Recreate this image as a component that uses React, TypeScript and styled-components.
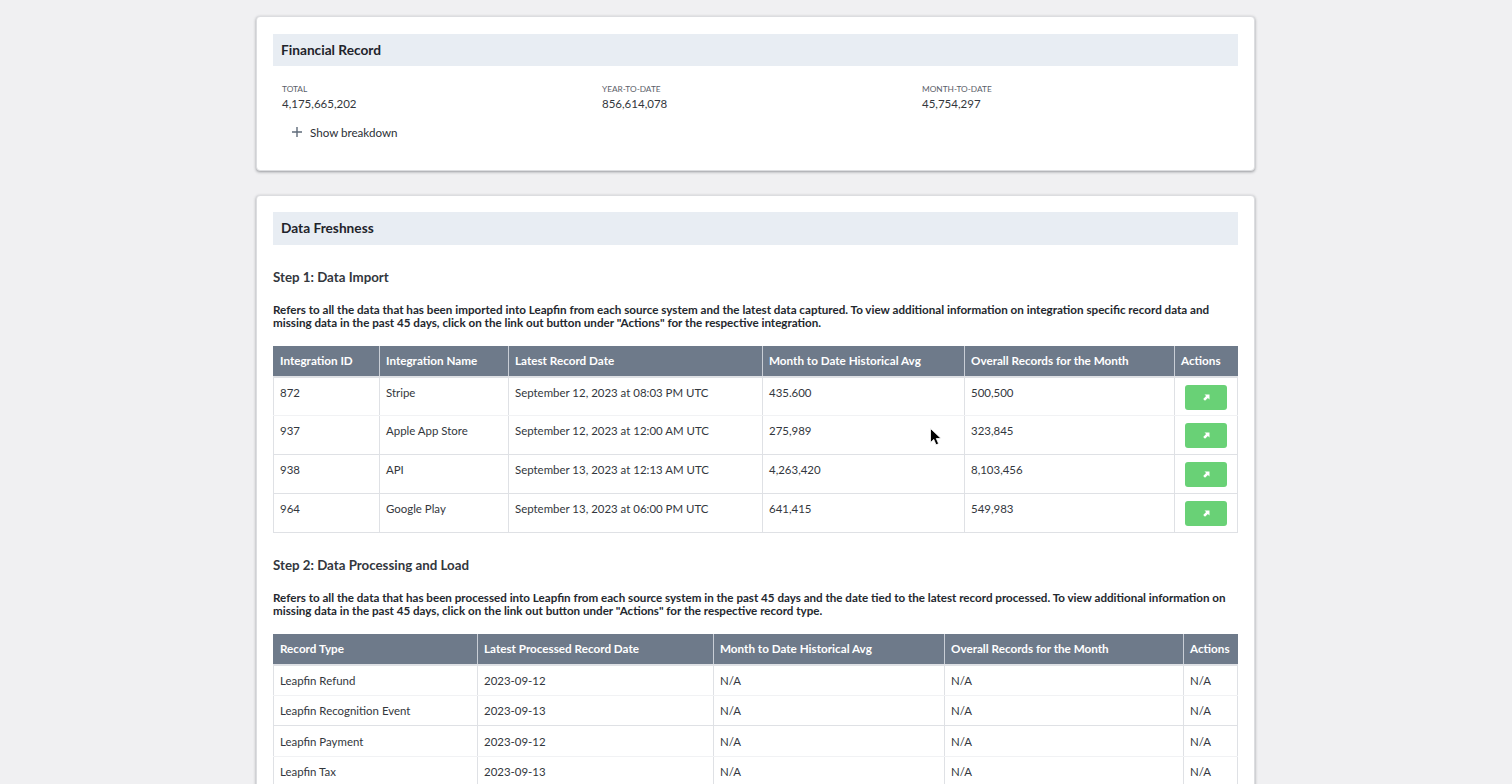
import React from 'react'
import styled, { createGlobalStyle } from 'styled-components'

const GlobalStyle = createGlobalStyle`
    html, body {
        margin: 0;
        padding: 0;
        height: 784px;
        overflow: hidden;
        background: #f0f0f2;
        font-family: Lato, 'Open Sans', sans-serif;
        color: #2c3036;
    }
`

const Page = styled.div`
    position: relative;
    width: 999px;
    margin: 0 0 0 256px;
    padding-top: 16px;
    display: flex;
    flex-direction: column;
    gap: 24px;
`

const Card = styled.section<{ $top: number }>`
    background: #fff;
    border: 1px solid #dcdde0;
    border-radius: 4px;
    box-shadow: 0 1px 3px rgba(40, 44, 52, 0.45);
    padding: ${p => p.$top}px 16px 16px;
`

const CardTitle = styled.h2<{ $tall?: boolean }>`
    margin: 0;
    height: ${p => (p.$tall ? 33 : 32)}px;
    line-height: 32px;
    padding-left: 8px;
    background: #e8edf3;
    font-size: 13.7px;
    font-weight: 700;
    color: #1f242b;
`

const Stats = styled.div`
    display: grid;
    grid-template-columns: repeat(3, 320px);
    padding: 18px 0 0 9px;
`

const StatLabel = styled.div`
    font-size: 8.3px;
    line-height: 11px;
    color: #5b616a;
    text-transform: uppercase;
`

const StatValue = styled.div`
    font-size: 11.5px;
    line-height: 17px;
    color: #33373d;
`

const Breakdown = styled.button`
    display: flex;
    align-items: center;
    gap: 8px;
    margin: 13px 0 15px 19px;
    padding: 0;
    height: 14px;
    border: 0;
    background: none;
    font: inherit;
    font-size: 11.6px;
    color: #2c3036;
`

const StepTitle = styled.h3`
    margin: 24px 0 0;
    font-size: 13.3px;
    line-height: 17px;
    font-weight: 700;
    color: #33373d;
`

const StepText = styled.p<{ $size: number }>`
    margin: 17px 0 17px;
    font-size: ${p => p.$size}px;
    line-height: 13px;
    font-weight: 700;
    color: #24282e;
`

const Table = styled.table`
    width: 964px;
    table-layout: fixed;
    border-collapse: collapse;
    font-size: 11.45px;
`

const HeadCell = styled.th`
    height: 31px;
    padding: 0 6px 2px;
    background: #6e7a8a;
    border-left: 1px solid #c9ced6;
    border-bottom: 2px solid #dfe1e5;
    color: #fff;
    font-weight: 700;
    font-size: 11.7px;
    text-align: left;
    white-space: nowrap;
    box-sizing: border-box;
    &:first-child {
        border-left-color: #6e7a8a;
    }
    &:last-child {
        border-right: 1px solid #6e7a8a;
    }
`

const Cell = styled.td<{ $compact?: boolean }>`
    height: ${p => (p.$compact ? 30.5 : 38.75)}px;
    padding: ${p => (p.$compact ? '2px 6px 0' : '8px 6px 0')};
    vertical-align: ${p => (p.$compact ? 'middle' : 'top')};
    border: 1px solid #dfe1e5;
    line-height: 14px;
    color: #33373d;
    white-space: nowrap;
    box-sizing: border-box;
`

const Row = styled.tr<{ $faint?: boolean }>`
    ${p => (p.$faint ? 'td { border-bottom-color: #f1f2f4; }' : '')}
`

const ActionCell = styled(Cell)`
    padding: 7px 0 0;
    text-align: center;
`

const LinkButton = styled.button`
    display: inline-flex;
    align-items: center;
    justify-content: center;
    vertical-align: top;
    width: 42px;
    height: 25px;
    padding: 0;
    border: 0;
    border-radius: 3px;
    background: #69d176;
`

const Cursor = styled.svg`
    position: absolute;
    left: 674px;
    top: 428px;
`

const PlusIcon = () => (
    <svg width='10' height='10' viewBox='0 0 10 10'>
        <path d='M5 0v10M0 5h10' stroke='#5f6b7a' strokeWidth='1.4' fill='none' />
    </svg>
)

const ArrowIcon = () => (
    <svg width='7' height='7' viewBox='0 0 7 7'>
        <path d='M1.5 0.5H6.5V5.5L4.9 3.9 2 6.8 0.2 5 3.1 2.1Z' fill='#fff' />
    </svg>
)

const stats = [
    { label: 'Total', value: '4,175,665,202' },
    { label: 'Year-to-date', value: '856,614,078' },
    { label: 'Month-to-date', value: '45,754,297' },
]

const importColumns = [
    { title: 'Integration ID', width: 106 },
    { title: 'Integration Name', width: 129 },
    { title: 'Latest Record Date', width: 254 },
    { title: 'Month to Date Historical Avg', width: 202 },
    { title: 'Overall Records for the Month', width: 210 },
    { title: 'Actions', width: 63 },
]

const importRows = [
    ['872', 'Stripe', 'September 12, 2023 at 08:03 PM UTC', '435.600', '500,500'],
    ['937', 'Apple App Store', 'September 12, 2023 at 12:00 AM UTC', '275,989', '323,845'],
    ['938', 'API', 'September 13, 2023 at 12:13 AM UTC', '4,263,420', '8,103,456'],
    ['964', 'Google Play', 'September 13, 2023 at 06:00 PM UTC', '641,415', '549,983'],
]

const loadColumns = [
    { title: 'Record Type', width: 204 },
    { title: 'Latest Processed Record Date', width: 236 },
    { title: 'Month to Date Historical Avg', width: 231 },
    { title: 'Overall Records for the Month', width: 239 },
    { title: 'Actions', width: 54 },
]

const loadRows = [
    ['Leapfin Refund', '2023-09-12'],
    ['Leapfin Recognition Event', '2023-09-13'],
    ['Leapfin Payment', '2023-09-12'],
    ['Leapfin Tax', '2023-09-13'],
]

const ColGroup = ({ columns }: { columns: { title: string; width: number }[] }) => (
    <colgroup>
        {columns.map(c => (
            <col key={c.title} width={c.width} />
        ))}
    </colgroup>
)

const HeadRow = ({ columns }: { columns: { title: string; width: number }[] }) => (
    <thead>
        <tr>
            {columns.map(c => (
                <HeadCell key={c.title}>{c.title}</HeadCell>
            ))}
        </tr>
    </thead>
)

const App = () => (
    <Page>
        <GlobalStyle />
        <Card $top={17}>
            <CardTitle>Financial Record</CardTitle>
            <Stats>
                {stats.map(s => (
                    <div key={s.label}>
                        <StatLabel>{s.label}</StatLabel>
                        <StatValue>{s.value}</StatValue>
                    </div>
                ))}
            </Stats>
            <Breakdown>
                <PlusIcon />
                Show breakdown
            </Breakdown>
        </Card>
        <Card $top={16}>
            <CardTitle $tall>Data Freshness</CardTitle>
            <StepTitle>Step 1: Data Import</StepTitle>
            <StepText $size={11.65}>
                Refers to all the data that has been imported into Leapfin from each source system and the latest data
                captured. To view additional information on integration specific record data and missing data in the past
                45 days, click on the link out button under "Actions" for the respective integration.
            </StepText>
            <Table>
                <ColGroup columns={importColumns} />
                <HeadRow columns={importColumns} />
                <tbody>
                    {importRows.map((row, i) => (
                        <Row key={row[0]} $faint={i === 0}>
                            {row.map(value => (
                                <Cell key={value}>{value}</Cell>
                            ))}
                            <ActionCell>
                                <LinkButton>
                                    <ArrowIcon />
                                </LinkButton>
                            </ActionCell>
                        </Row>
                    ))}
                </tbody>
            </Table>
            <StepTitle>Step 2: Data Processing and Load</StepTitle>
            <StepText $size={11.61}>
                Refers to all the data that has been processed into Leapfin from each source system in the past 45 days and
                the date tied to the latest record processed. To view additional information on missing data in the past 45
                days, click on the link out button under "Actions" for the respective record type.
            </StepText>
            <Table>
                <ColGroup columns={loadColumns} />
                <HeadRow columns={loadColumns} />
                <tbody>
                    {loadRows.map((row, i) => (
                        <Row key={row[0]} $faint={i % 2 === 0}>
                            <Cell $compact>{row[0]}</Cell>
                            <Cell $compact>{row[1]}</Cell>
                            <Cell $compact>N/A</Cell>
                            <Cell $compact>N/A</Cell>
                            <Cell $compact>N/A</Cell>
                        </Row>
                    ))}
                </tbody>
            </Table>
        </Card>
        <Cursor width='12' height='18' viewBox='0 0 12 18'>
            <path d='M0.5 0.5V14.5L3.8 11.4 6 16.8 8.6 15.7 6.3 10.5H11Z' fill='#000' stroke='#fff' strokeWidth='0.8' />
        </Cursor>
    </Page>
)

export default App
